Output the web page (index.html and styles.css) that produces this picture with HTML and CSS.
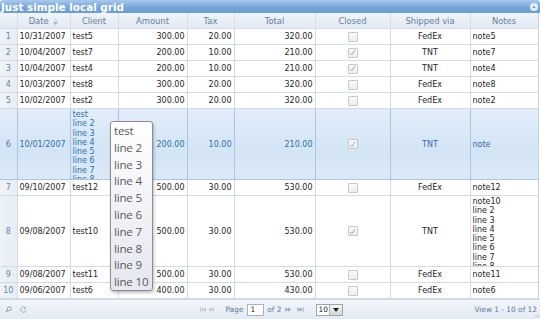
FILE: index.html
```html
<!DOCTYPE html>
<html lang="en">
  <head>
    <meta charset="UTF-8" />
    <meta name="viewport" content="width=device-width, initial-scale=1.0" />
    <title>Just simple local grid</title>
    <link rel="stylesheet" href="styles.css">
  </head>
  <body>
    <div class="jqgrid">
      <div class="caption">
        <span>Just simple local grid</span>
        <span class="collapse">
          <svg width="8" height="8" viewBox="0 0 8 8"><circle cx="4" cy="4" r="4" fill="#e4effa"/><path d="M2.2 5 L4 2.8 L5.8 5 Z" fill="#6d9fd3"/></svg>
        </span>
      </div>
      <table class="grid">
        <colgroup>
          <col style="width:17px"><col style="width:53px"><col style="width:48px">
          <col style="width:69px"><col style="width:47px"><col style="width:81px">
          <col style="width:75px"><col style="width:80px"><col style="width:68px">
        </colgroup>
        <thead>
          <tr>
            <th></th>
            <th>Date <svg class="sort" width="5" height="7" viewBox="0 0 5 7"><path d="M0 3 L2.5 0 L5 3 Z" fill="#d3dde8"/><path d="M0 4 L2.5 7 L5 4 Z" fill="#9fb3c8"/></svg></th>
            <th>Client</th>
            <th>Amount</th>
            <th>Tax</th>
            <th>Total</th>
            <th>Closed</th>
            <th>Shipped via</th>
            <th>Notes</th>
          </tr>
        </thead>
        <tbody id="rows"></tbody>
      </table>

      <div class="tip">
        test<br>line 2<br>line 3<br>line 4<br>line 5<br>line 6<br>line 7<br>line 8<br>line 9<br>line 10
      </div>

      <div class="pager">
        <div class="pager-left">
          <svg width="7" height="7" viewBox="0 0 7 7"><circle cx="4.2" cy="2.8" r="2" fill="none" stroke="#8da3ba" stroke-width="1"/><path d="M2.8 4.2 L0.8 6.2" stroke="#8da3ba" stroke-width="1.2"/></svg>
          <svg width="7" height="7" viewBox="0 0 7 7"><path d="M5.6 2.2 A2.6 2.6 0 1 0 6 4" fill="none" stroke="#9fb3c8" stroke-width="1"/><path d="M4.4 0.6 L6.2 2.6 L3.8 3 Z" fill="#9fb3c8"/></svg>
        </div>
        <div class="pager-center">
          <svg class="seek first" width="7" height="5" viewBox="0 0 7 5"><rect x="0" y="0" width="1" height="5" fill="#b9c7d6"/><path d="M1.5 2.5 L4 0 L4 5 Z M4 2.5 L6.5 0 L6.5 5 Z" fill="#b9c7d6"/></svg>
          <svg class="seek prev" width="7" height="5" viewBox="0 0 7 5"><path d="M0.5 2.5 L3.5 0 L3.5 5 Z M3.5 2.5 L6.5 0 L6.5 5 Z" fill="#b9c7d6"/></svg>
          <span class="page-label">Page</span>
          <span class="page-input">1</span>
          <span class="page-total">of 2</span>
          <svg class="seek next" width="7" height="5" viewBox="0 0 7 5"><path d="M0.5 0 L3.5 2.5 L0.5 5 Z M3.5 0 L6.5 2.5 L3.5 5 Z" fill="#8fa4bb"/></svg>
          <svg class="seek last" width="7" height="5" viewBox="0 0 7 5"><path d="M0.5 0 L3 2.5 L0.5 5 Z M3 0 L5.5 2.5 L3 5 Z" fill="#8fa4bb"/><rect x="6" y="0" width="1" height="5" fill="#8fa4bb"/></svg>
          <span class="select"><span class="select-value">10</span><span class="select-btn"><svg width="6" height="4" viewBox="0 0 6 4"><path d="M0 0 L6 0 L3 4 Z" fill="#222"/></svg></span></span>
        </div>
        <div class="pager-right">View 1 - 10 of 12</div>
        <svg class="grip" width="5" height="5" viewBox="0 0 5 5"><path d="M4 1 L4 2 M2 3 L2 4 M4 3 L4 4" stroke="#9fb3c8" stroke-width="1"/></svg>
      </div>
    </div>

    <script>
      const data = [
        ["10/31/2007", "test5", "300.00", "20.00", "320.00", false, "FedEx", "note5"],
        ["10/04/2007", "test7", "200.00", "10.00", "210.00", true, "TNT", "note7"],
        ["10/04/2007", "test4", "200.00", "10.00", "210.00", true, "TNT", "note4"],
        ["10/03/2007", "test8", "300.00", "20.00", "320.00", false, "FedEx", "note8"],
        ["10/02/2007", "test2", "300.00", "20.00", "320.00", false, "FedEx", "note2"],
        ["10/01/2007", "test\nline 2\nline 3\nline 4\nline 5\nline 6\nline 7\nline 8\nline 9\nline 10", "200.00", "10.00", "210.00", true, "TNT", "note"],
        ["09/10/2007", "test12", "500.00", "30.00", "530.00", false, "FedEx", "note12"],
        ["09/08/2007", "test10", "500.00", "30.00", "530.00", true, "TNT", "note10\nline 2\nline 3\nline 4\nline 5\nline 6\nline 7\nline 8\nline 9\nline 10"],
        ["09/08/2007", "test11", "500.00", "30.00", "530.00", false, "FedEx", "note11"],
        ["09/06/2007", "test6", "400.00", "30.00", "430.00", false, "FedEx", "note6"],
      ];
      const aligns = ["left", "left", "right", "right", "right", "center", "center", "left"];
      const tbody = document.getElementById("rows");

      function textCell(td, text) {
        if (text.includes("\n")) {
          const div = document.createElement("div");
          div.className = "multi";
          div.textContent = text;
          td.appendChild(div);
        } else {
          td.textContent = text;
        }
      }

      data.forEach((row, i) => {
        const tr = tbody.insertRow();
        if (i === 5) tr.className = "hover";
        const rn = tr.insertCell();
        rn.className = "rn";
        rn.textContent = i + 1;
        row.forEach((value, c) => {
          const td = tr.insertCell();
          td.className = aligns[c];
          if (c === 5) {
            const box = document.createElement("span");
            box.className = "check";
            if (value) {
              box.innerHTML = '<svg width="7" height="7" viewBox="0 0 7 7"><path d="M1 4 L2.8 5.8 L6 1" fill="none" stroke="#9aa4ae" stroke-width="1"/></svg>';
            }
            td.appendChild(box);
          } else {
            textCell(td, value);
          }
        });
      });
    </script>
  </body>
</html>
```

FILE: styles.css
```css
body {
  margin: 0;
  padding: 0;
  background: #fff;
  font-family: "DejaVu Sans", Verdana, sans-serif;
}
.jqgrid {
  position: relative;
  width: 540px;
  height: 319px;
  overflow: hidden;
}
.caption {
  height: 13px;
  display: flex;
  align-items: center;
  justify-content: space-between;
  padding: 0 1px 0 1px;
  box-sizing: border-box;
  background: linear-gradient(#a9c9ec, #77a6dc 55%, #6c9dd6);
  color: #fff;
  font-weight: bold;
  font-size: 10.4px;
  border-radius: 3px 3px 0 0;
}
.collapse {
  display: flex;
  margin-right: 1px;
}
.grid {
  width: 538px;
  border-collapse: collapse;
  table-layout: fixed;
  font-size: 8px;
  color: #262626;
}
.grid th {
  height: 15px;
  padding: 0 2px;
  font-weight: normal;
  font-size: 8.4px;
  color: #6481a0;
  background: linear-gradient(#f1f5fa, #e1e9f2);
  border: 1px solid #d4dfea;
  border-top: none;
  white-space: nowrap;
  overflow: hidden;
}
.grid th:first-child {
  border-left: none;
}
.sort {
  margin-left: 2px;
  vertical-align: -1px;
}
.grid td {
  height: 15px;
  padding: 0 2px;
  border: 1px solid #d2dce6;
  white-space: nowrap;
  overflow: hidden;
  vertical-align: middle;
}
.grid td:first-child {
  border-left: none;
}
.grid td:last-child,
.grid th:last-child {
  border-right: 1px solid #c2d3e4;
}
.grid td.rn {
  text-align: center;
  color: #6a86a4;
  background: linear-gradient(90deg, #eef3f8, #e6edf4);
}
.left {
  text-align: left;
}
.right {
  text-align: right;
}
.center {
  text-align: center;
}
.grid td:has(.multi) {
  vertical-align: top;
}
.multi {
  white-space: pre;
  line-height: 9.3px;
  height: 70px;
  overflow: hidden;
  padding-top: 1px;
  box-sizing: border-box;
}
.hover td {
  background: linear-gradient(#e2edf9, #d3e4f5 60%, #dce9f7);
  border-color: #a9c7e3;
  color: #2f6fa6;
}
.hover td.rn {
  background: linear-gradient(#e2edf9, #d3e4f5 60%, #dce9f7);
  color: #577ea6;
}
.check {
  display: inline-flex;
  align-items: center;
  justify-content: center;
  width: 8px;
  height: 8px;
  border: 1px solid #c4c9cf;
  border-radius: 1px;
  background: linear-gradient(#fafafa, #eceef0);
  vertical-align: middle;
}
.tip {
  position: absolute;
  left: 110px;
  top: 121px;
  width: 43px;
  height: 170px;
  padding: 1px 0 0 3px;
  box-sizing: border-box;
  border: 1px solid #8a8d93;
  border-radius: 3px;
  background: linear-gradient(#ffffff, #e6e7ef);
  box-shadow: 1px 2px 3px rgba(0, 0, 0, 0.25);
  font-family: "Open Sans", "Noto Sans", sans-serif;
  font-size: 11.6px;
  line-height: 16.8px;
  color: #5a5a5a;
  letter-spacing: -0.2px;
  white-space: nowrap;
}
.pager {
  position: relative;
  height: 19px;
  display: grid;
  grid-template-columns: 1fr 145px 1fr;
  align-items: center;
  background: linear-gradient(#f2f6fa, #e2eaf3);
  border-top: 1px solid #cfdbe7;
  font-size: 7.4px;
  color: #5d7a99;
}
.pager-left {
  display: flex;
  gap: 8px;
  padding-left: 5px;
}
.pager-center {
  display: flex;
  align-items: center;
  white-space: nowrap;
}
.seek.first {
  margin-left: 2px;
  margin-right: 2px;
}
.seek.prev {
  margin-right: 11px;
}
.page-label {
  margin-right: 4px;
}
.page-input {
  width: 14px;
  height: 10px;
  line-height: 10px;
  padding-left: 2px;
  border: 1px solid #a9b4bf;
  background: #fff;
  color: #222;
  margin-right: 3px;
}
.page-total {
  margin-right: 3px;
}
.seek.next {
  margin-right: 6px;
}
.select {
  display: flex;
  height: 12px;
  width: 29px;
  margin-left: 12px;
  border: 1px solid #9aa6b2;
  background: #fff;
  box-sizing: border-box;
}
.select-value {
  flex: 1;
  line-height: 10px;
  padding-left: 2px;
  color: #222;
}
.select-btn {
  width: 12px;
  display: flex;
  align-items: center;
  justify-content: center;
  background: linear-gradient(#f4f4f4, #d6d6d6);
  border-left: 1px solid #b0b0b0;
}
.pager-right {
  text-align: right;
  padding-right: 3px;
}
.grip {
  position: absolute;
  right: 1px;
  bottom: 1px;
}
```
